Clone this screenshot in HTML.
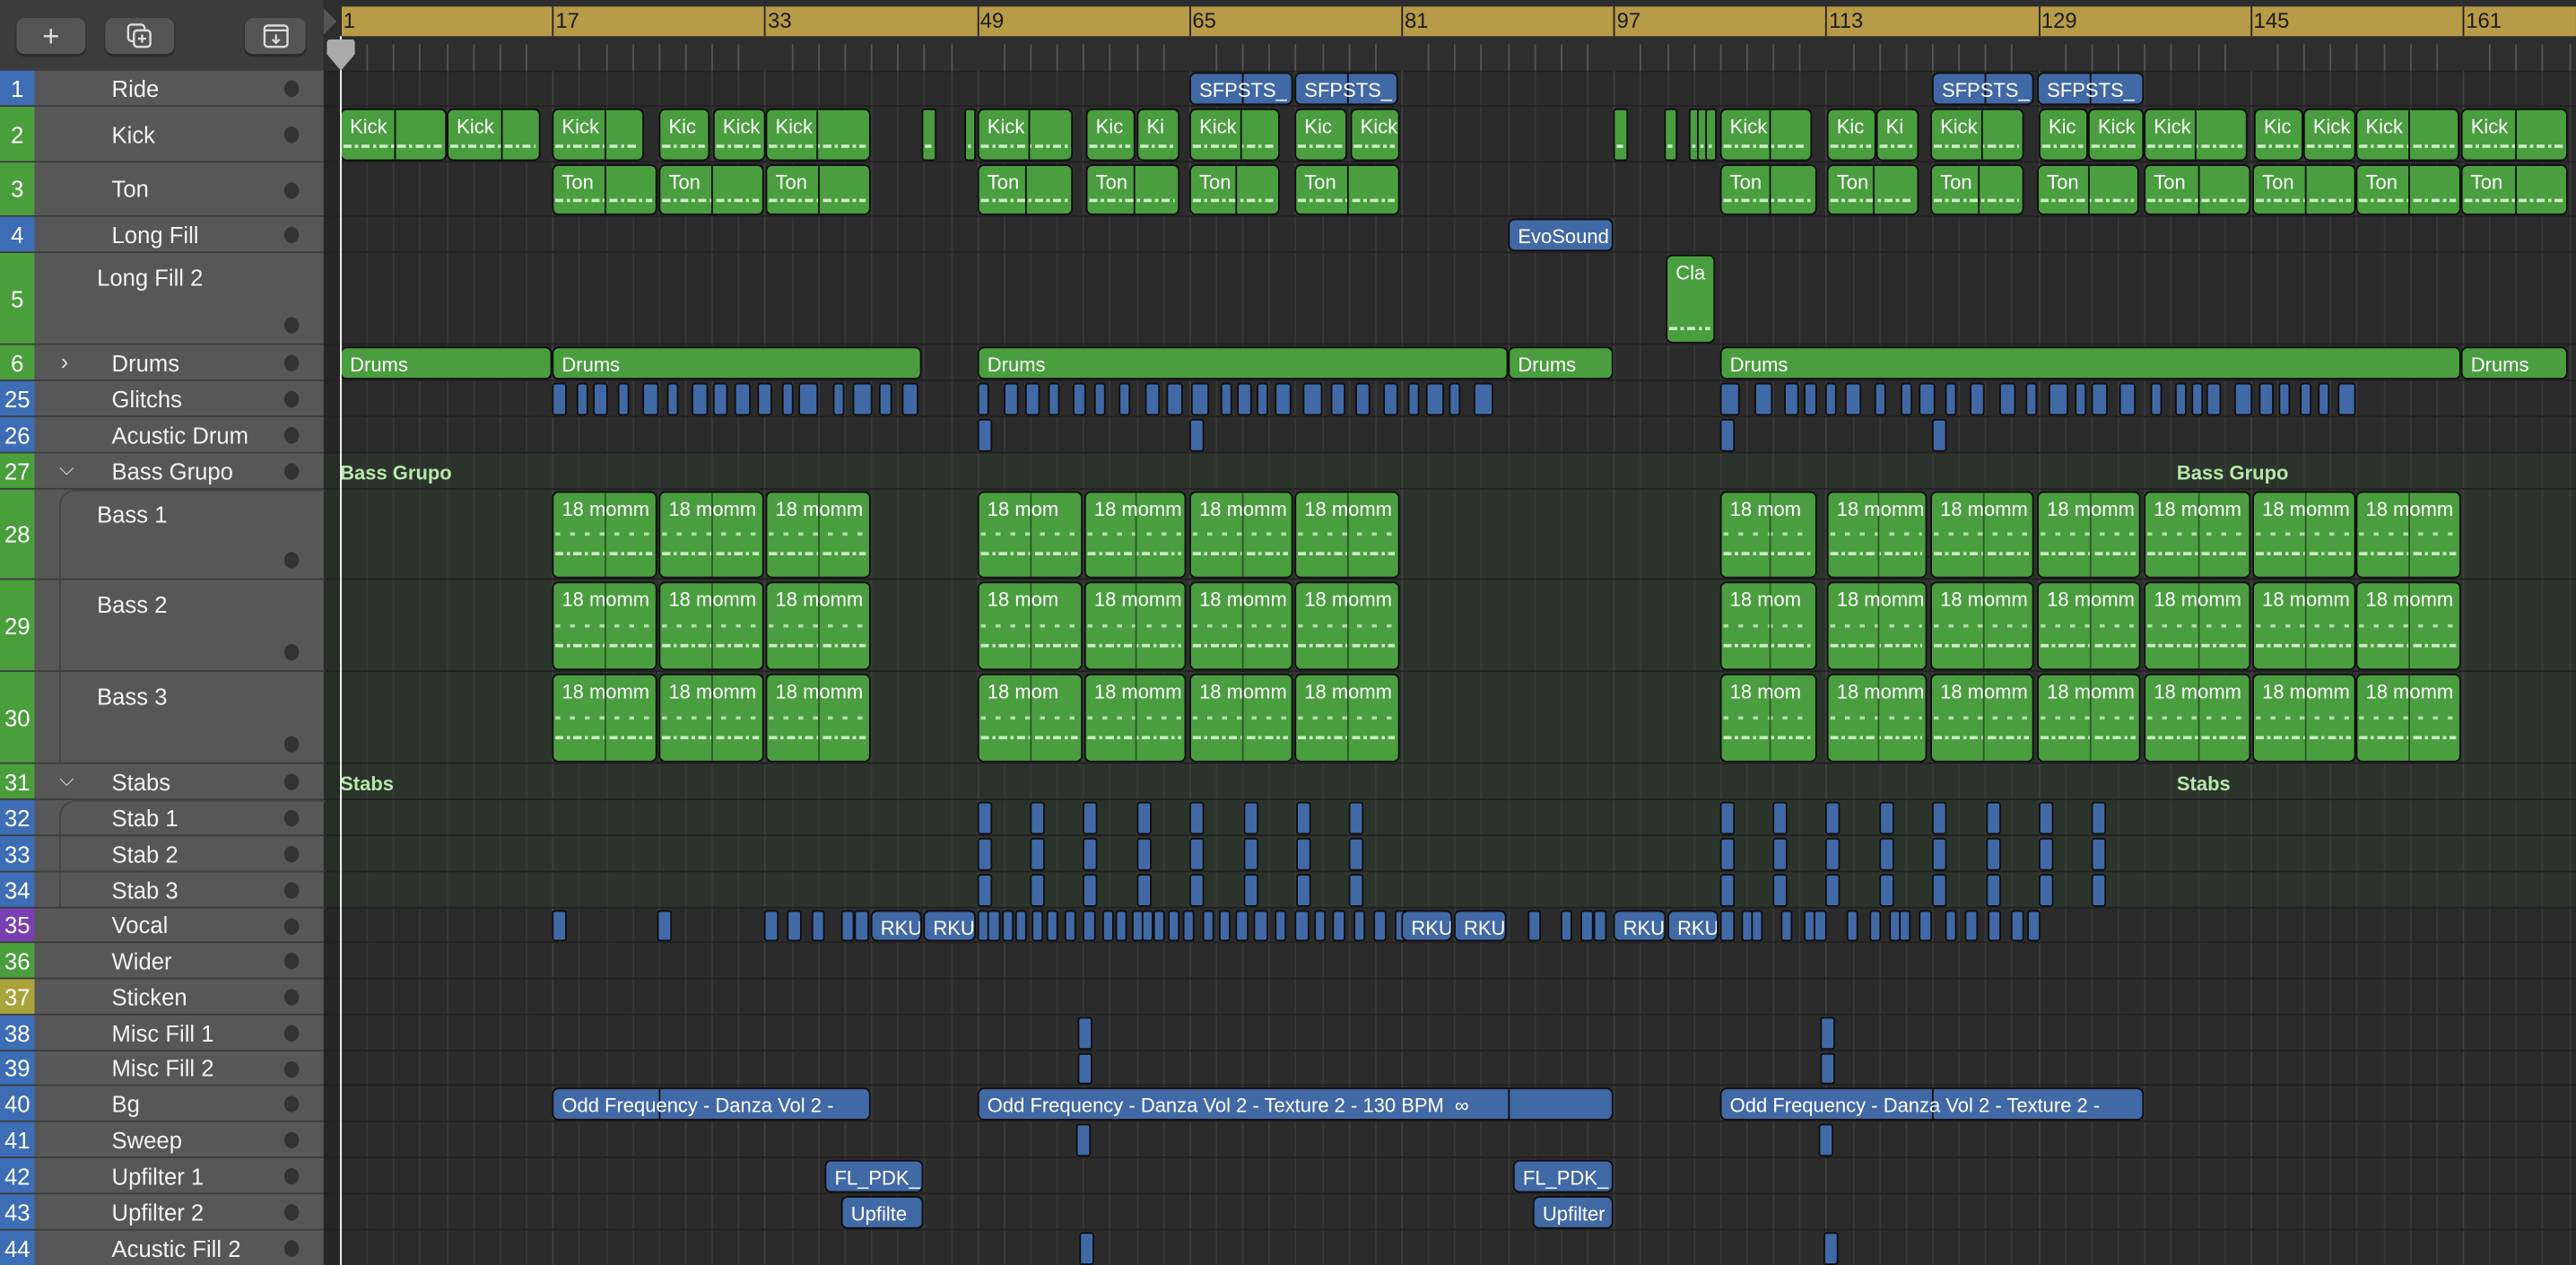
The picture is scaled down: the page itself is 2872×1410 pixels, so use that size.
<!DOCTYPE html>
<html><head><meta charset="utf-8">
<style>
html,body{margin:0;padding:0;background:#2b2b2b;overflow:hidden;width:2872px;height:1410px}
#s{position:absolute;left:0;top:0;width:1568px;height:770px;transform:scale(1.8316,1.8312);transform-origin:0 0;font-family:"Liberation Sans",sans-serif;background:#2b2b2b;overflow:hidden}
.a{position:absolute}
.hdr{left:0;top:0;width:197px;height:43px;background:#3c3c3c;border-bottom:1px solid #2e2e2e}
.btn{position:absolute;top:11px;height:22px;background:#555;border-radius:5px;box-shadow:0 1px 1px #222;color:#ddd;text-align:center;line-height:22px;font-size:18px}
.tl{position:absolute;left:0;width:197px;background:#575757;border-bottom:1px solid #3c3c3c;box-sizing:border-box}
.num{position:absolute;left:0;top:0;bottom:0;width:21px;color:#fff;font-size:14px;text-align:center}
.nm{position:absolute;left:68px;color:#f2f2f2;font-size:14px}
.dot{position:absolute;left:173px;width:9px;height:10px;border-radius:50%;background:#333}
.r{position:absolute;box-sizing:border-box;border:1px solid #0e0e0e;border-radius:4px;color:#fff;font-size:12px;overflow:hidden;white-space:nowrap;padding:3px 0 0 5px;line-height:14px}
.r span{position:relative;z-index:2}
.sp{position:absolute;top:0;bottom:0;width:1px;background:#0e0e0e;z-index:1}
.g{background:#4a9e3f}.b{background:#4169a6}
.dl{position:absolute;left:1px;right:2px;height:2px;background:repeating-linear-gradient(90deg,#c8eec0 0 5px,transparent 5px 7px,#c8eec0 7px 9px,transparent 9px 11px)}
.grp{color:#b7e8ab;font-weight:bold;font-size:12px;position:absolute}
</style></head><body>
<div id="s">
 <div class="a hdr">
  <div class="btn" style="left:10px;width:42px">+</div>
  <div class="btn" style="left:64px;width:42px"><svg width="16" height="16" viewBox="0 0 16 16" style="margin-top:3px"><rect x="1" y="1" width="10" height="10" rx="2" fill="none" stroke="#ddd" stroke-width="1.3"/><rect x="4.5" y="4.5" width="10" height="10" rx="2" fill="#555" stroke="#ddd" stroke-width="1.3"/><path d="M9.5 7v5M7 9.5h5" stroke="#ddd" stroke-width="1.3"/></svg></div>
  <div class="btn" style="left:149px;width:37px"><svg width="16" height="16" viewBox="0 0 16 16" style="margin-top:3px"><rect x="1" y="1.5" width="14" height="13" rx="2" fill="none" stroke="#ddd" stroke-width="1.3"/><path d="M1 4.5h14M8 7v5M5.8 10l2.2 2.2 2.2-2.2" stroke="#ddd" stroke-width="1.2" fill="none"/></svg></div>
 </div>
 <div class="a" style="left:197px;top:0;width:1371px;height:43px;background:#2e2e2e;border-bottom:1px solid #232323"></div>
 <div class="a" style="left:207px;top:4px;width:1361px;height:18px;background:#b89b46"></div>
</div>
<script>
var S=document.getElementById('s');
function el(h){S.insertAdjacentHTML('beforeend',h);}
var rows=[[1,'Ride',43,65,'#3d6db5'],[2,'Kick',65,99,'#4a9e3c'],[3,'Ton',99,132,'#4a9e3c'],[4,'Long Fill',132,154,'#3d6db5'],[5,'Long Fill 2',154,210,'#4a9e3c'],[6,'Drums',210,232,'#4a9e3c'],[25,'Glitchs',232,254,'#3d6db5'],[26,'Acustic Drum',254,276,'#3d6db5'],[27,'Bass Grupo',276,298,'#4a9e3c'],[28,'Bass 1',298,353,'#4a9e3c'],[29,'Bass 2',353,409,'#4a9e3c'],[30,'Bass 3',409,465,'#4a9e3c'],[31,'Stabs',465,487,'#4a9e3c'],[32,'Stab 1',487,509,'#3d6db5'],[33,'Stab 2',509,531,'#3d6db5'],[34,'Stab 3',531,553,'#3d6db5'],[35,'Vocal',553,574,'#7a3fb3'],[36,'Wider',574,596,'#4a9e3c'],[37,'Sticken',596,618,'#a8a33a'],[38,'Misc Fill 1',618,640,'#3d6db5'],[39,'Misc Fill 2',640,661,'#3d6db5'],[40,'Bg',661,683,'#3d6db5'],[41,'Sweep',683,705,'#3d6db5'],[42,'Upfilter 1',705,727,'#3d6db5'],[43,'Upfilter 2',727,749,'#3d6db5'],[44,'Acustic Fill 2',749,771,'#3d6db5']];
el('<div class="a" style="left:197px;top:276px;width:1371px;height:277px;background:#2b342b"></div>');
el('<div class="a" style="left:197px;top:43px;width:10px;height:727px;background:rgba(0,0,0,0.12)"></div>');
var h='';
for(var i=0;i<=85;i++){var x=207+i*16.15;if(x>1568)break;var maj=(i%8==0);h+='<div class="a" style="left:'+x.toFixed(1)+'px;top:'+(maj?4:27)+'px;width:1px;height:'+(maj?18:16)+'px;background:'+(maj?'#222':'#555')+'"></div>';h+='<div class="a" style="left:'+x.toFixed(1)+'px;top:43px;width:1px;height:727px;background:'+(maj?'#3f3f3f':'#393939')+'"></div>';}
el(h);
[1,17,33,49,65,81,97,113,129,145,161].forEach(function(n,i){el('<div class="a" style="left:'+(209+i*129.2)+'px;top:4px;font-size:13px;color:#1a1a1a;line-height:18px">'+n+'</div>');});
h='';
rows.forEach(function(r){
 h+='<div class="a" style="left:197px;top:'+(r[3]-1)+'px;width:1371px;height:1px;background:#222"></div>';
 var tall=r[3]-r[2]>40;
 h+='<div class="tl" style="top:'+r[2]+'px;height:'+(r[3]-r[2])+'px"><div class="num" style="background:'+r[4]+';line-height:'+(r[3]-r[2])+'px">'+r[0]+'</div>';
 var ind=(r[0]>=28&&r[0]<=30)||(r[0]>=32&&r[0]<=34);
 if(ind)h+='<div class="a" style="left:36px;top:0;bottom:-1px;width:161px;border-left:1px solid #444;border-bottom:1px solid #3c3c3c;'+((r[0]==28||r[0]==32)?'border-top:1px solid #444;border-top-left-radius:10px;':'')+'"></div>';
 h+='<div class="nm" style="'+(tall?'left:59px;top:7px':'top:'+((r[3]-r[2]-17)/2)+'px')+'">'+r[1]+'</div>';
 if(r[0]==6)h+='<div class="a" style="left:37px;top:2px;color:#ddd;font-size:14px">›</div>';
 if(r[0]==27||r[0]==31)h+='<div class="a" style="left:36px;top:2px;color:#ddd;font-size:12px">⌵</div>';
 h+='<div class="dot" style="top:'+(tall?(r[3]-r[2]-17):((r[3]-r[2]-10)/2))+'px"></div></div>';
});
el(h);
function row(n){for(var i=0;i<rows.length;i++)if(rows[i][0]==n)return rows[i];}
function R(n,x1,x2,c,t,dl,sp,rad){var r=row(n);var s='<div class="r '+c+'" style="left:'+x1+'px;top:'+(r[2]+1)+'px;width:'+(x2-x1)+'px;height:'+(r[3]-r[2]-2)+'px'+(rad!=null?';border-radius:'+rad+'px':'')+'"><span>'+(t||'')+'</span>';if(sp)s+='<div class="sp" style="left:'+(sp-x1-1)+'px"></div>';if(dl)s+='<div class="dl" style="bottom:7px"></div>';return s+'</div>';}
function merged(list){var out=[];list.forEach(function(a){var p=out[out.length-1];if(a[2]===''&&p&&Math.abs(p[1]-a[0])<=1&&p[3]==null){p[3]=a[0];p[1]=a[1];}else out.push([a[0],a[1],a[2],null]);});return out;}
h='';
merged([[724,756,'SFPSTS_'],[756,787,''],[788,820,'SFPSTS_'],[820,851,''],[1176,1208,'SFPSTS_'],[1208,1238,''],[1240,1272,'SFPSTS_'],[1272,1305,'']]).forEach(function(a){h+=R(1,a[0],a[1],'b',a[2],0,a[3]);});
merged([[207,240,'Kick'],[240,272,''],[272,305,'Kick'],[305,329,''],[336,368,'Kick'],[368,392,''],[401,432,'Kic'],[434,466,'Kick'],[466,497,'Kick'],[497,530,''],[561,570,''],[587,591,''],[595,626,'Kick'],[626,653,''],[661,691,'Kic'],[692,718,'Ki'],[724,755,'Kick'],[755,779,''],[788,820,'Kic'],[822,852,'Kick'],[982,991,''],[1013,1021,''],[1028,1033,'x'],[1033,1038,'x'],[1038,1043,'x'],[1047,1077,'Kick'],[1077,1103,''],[1112,1142,'Kic'],[1142,1168,'Ki'],[1175,1206,'Kick'],[1206,1232,''],[1241,1271,'Kic'],[1271,1305,'Kick'],[1305,1336,'Kick'],[1336,1368,''],[1372,1402,'Kic'],[1402,1434,'Kick'],[1434,1466,'Kick'],[1466,1497,''],[1498,1531,'Kick'],[1531,1563,'']]).forEach(function(a){h+=R(2,a[0],a[1],'g',a[2]=='x'?'':a[2],1,a[3],(a[1]-a[0]<12)?2:null);});
[[336,400],[401,465],[466,530],[595,653],[661,718],[724,779],[788,852],[1047,1106],[1112,1168],[1175,1232],[1240,1302],[1305,1370],[1371,1434],[1434,1498],[1498,1563]].forEach(function(a){var m=Math.round((a[0]+a[1])/2);h+=R(3,a[0],a[1],'g','Ton',1,m);});
h+=R(4,918,982,'b','EvoSound');
h+=R(5,1014,1044,'g','Cla',1);
[[207,336],[336,561],[595,918],[918,982],[1047,1498],[1498,1563]].forEach(function(a){h+=R(6,a[0],a[1],'g','Drums');});
var seed=7;function rnd(){seed=(seed*9301+49297)%233280;return seed/233280;}
[[336,560],[595,918],[1047,1438]].forEach(function(a){for(var x=a[0];x<a[1]-5;){var w=6+Math.floor(rnd()*7);h+=R(25,x,x+w,'b','',0,null,2);x+=w+3+Math.floor(rnd()*7);}});
[595,724,1047,1176].forEach(function(x){h+=R(26,x,x+9,'b','',0,null,2);});
[[336,400],[401,465],[466,530],[595,659],[660,722],[724,787],[788,852],[1047,1106],[1112,1173],[1175,1238],[1240,1303],[1305,1370],[1371,1434],[1434,1498]].forEach(function(a){var m=Math.round((a[0]+a[1])/2);[28,29,30].forEach(function(n){var r=row(n);h+='<div class="r g" style="left:'+a[0]+'px;top:'+(r[2]+1)+'px;width:'+(a[1]-a[0])+'px;height:'+(r[3]-r[2]-2)+'px"><span>'+((a[0]==595||a[0]==1047)?'18 mom':'18 momm')+'</span><div class="sp" style="left:'+(m-a[0]-1)+'px;background:#2a5a24"></div><div class="dl" style="bottom:25px;opacity:.8;background:repeating-linear-gradient(90deg,#c8eec0 0 3px,transparent 3px 9px)"></div><div class="dl" style="bottom:13px"></div></div>';});});
h+='<div class="grp" style="left:207px;top:281px">Bass Grupo</div><div class="grp" style="left:1325px;top:281px">Bass Grupo</div><div class="grp" style="left:207px;top:470px">Stabs</div><div class="grp" style="left:1325px;top:470px">Stabs</div>';
[595,627,659,692,724,757,789,821,1047,1079,1111,1144,1176,1209,1241,1273].forEach(function(x){[32,33,34].forEach(function(n){h+=R(n,x,x+9,'b','',0,null,2);});});
var voc=[[336,345],[400,409],[465,474],[479,488],[494,502],[512,520],[520,529],[853,859],[930,938],[950,957],[962,970],[970,978],[1047,1056],[1060,1066],[1066,1072],[1084,1090],[1098,1104],[1104,1112],[1124,1130],[1138,1144],[1150,1156],[1156,1162],[1168,1176],[1184,1190],[1196,1204],[1210,1218],[1224,1232],[1234,1242]];
for(var x=595;x<852;){var w=5+Math.floor(rnd()*5);voc.push([x,x+w]);x+=w+1+Math.floor(rnd()*5);}
voc.forEach(function(a){h+=R(35,a[0],a[1],'b','',0,null,2);});
[[530,561],[562,594],[853,884],[885,917],[982,1014],[1015,1046]].forEach(function(a){h+=R(35,a[0],a[1],'b','RKU');});
h+=R(38,656,665,'b','',0,null,2)+R(38,1108,1117,'b','',0,null,2)+R(39,656,665,'b','',0,null,2)+R(39,1108,1117,'b','',0,null,2);
h+=R(40,336,530,'b','Odd Frequency - Danza Vol 2 -',0,401)+R(40,595,982,'b','Odd Frequency - Danza Vol 2 - Texture 2 - 130 BPM &nbsp;&#x221E;',0,918)+R(40,1047,1305,'b','Odd Frequency - Danza Vol 2 - Texture 2 -',0,1176);
h+=R(41,655,664,'b','',0,null,2)+R(41,1107,1116,'b','',0,null,2);
h+=R(42,502,562,'b','FL_PDK_')+R(42,921,982,'b','FL_PDK_');
h+=R(43,512,562,'b','Upfilte')+R(43,933,982,'b','Upfilter');
h+=R(44,657,666,'b','',0,null,2)+R(44,1110,1119,'b','',0,null,2);
el(h);
el('<div class="a" style="left:207px;top:22px;width:1px;height:748px;background:#fff"></div><svg class="a" style="left:198px;top:24px" width="19" height="20"><path d="M1 2Q1 0 3 0H16Q18 0 18 2V9L9.5 19L1 9Z" fill="#aaa"/></svg><svg class="a" style="left:197px;top:5px" width="8" height="16"><path d="M0 0L8 8L0 16Z" fill="#555"/></svg>');
</script>
</body></html>
